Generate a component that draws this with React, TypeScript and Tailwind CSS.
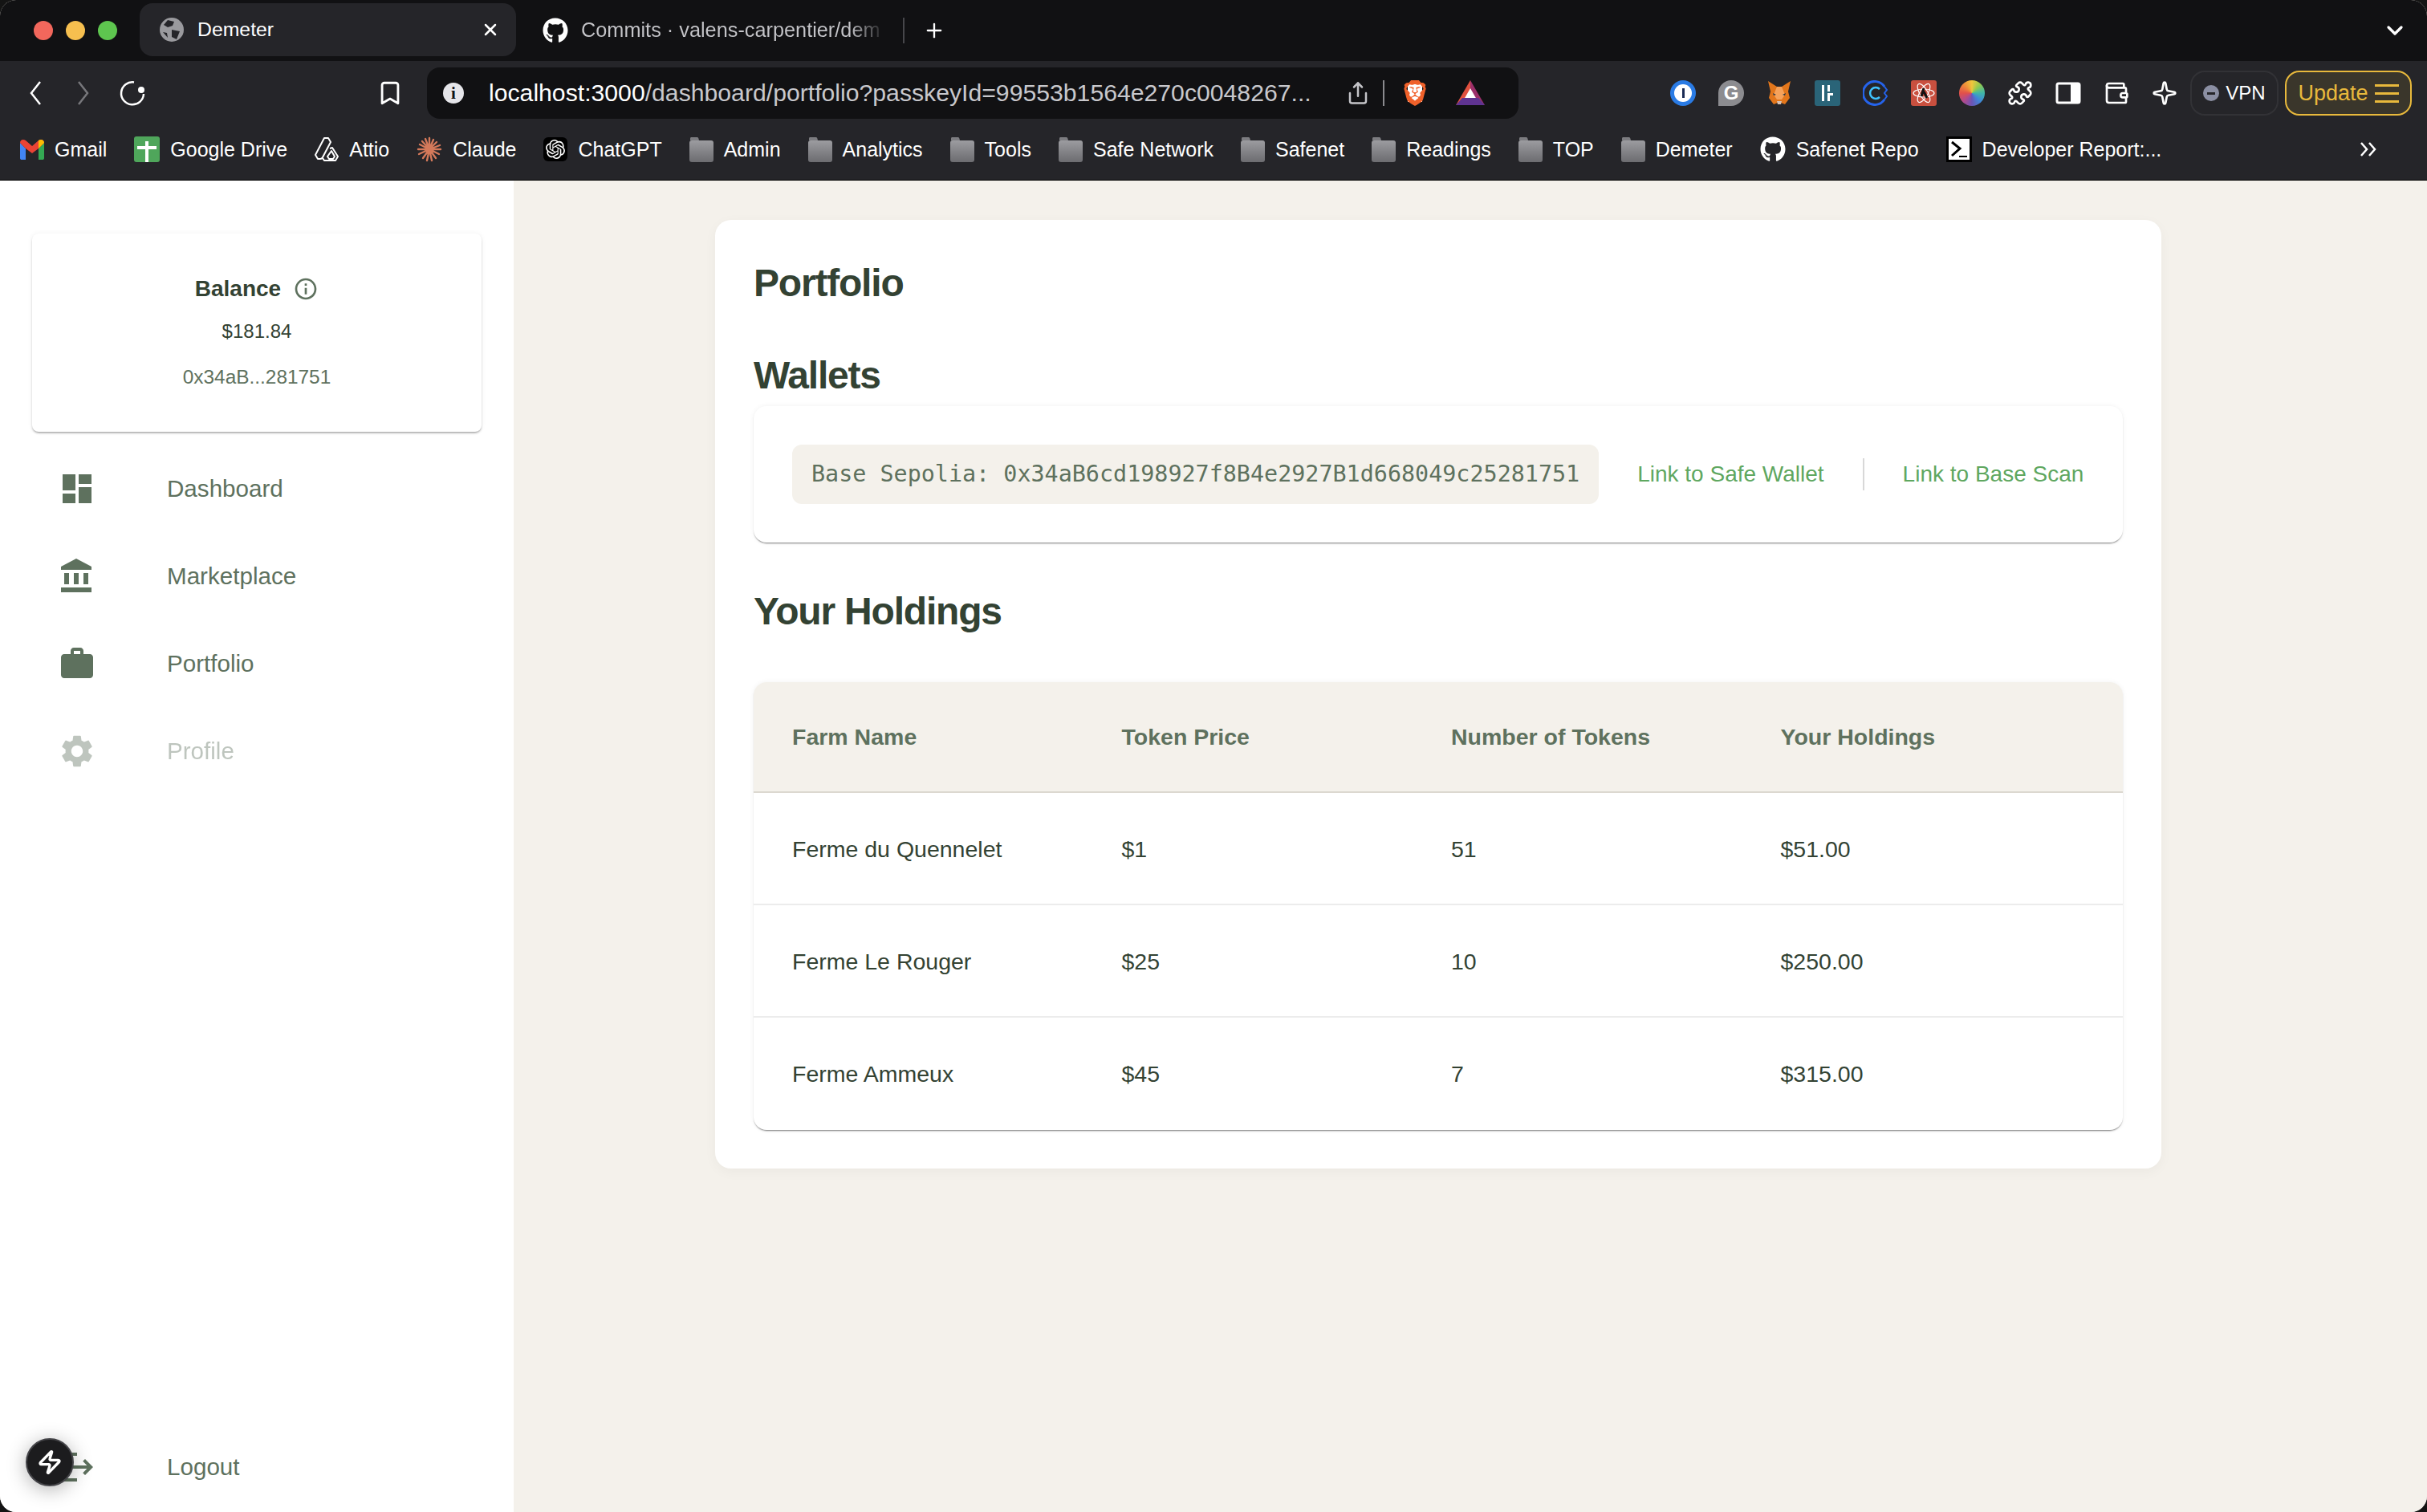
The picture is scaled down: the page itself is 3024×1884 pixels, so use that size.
import { Bookmark, ChevronDown, Plus, Puzzle, Share, Sparkle, Wallet, X, Zap } from 'lucide-react';
import { FaGithub } from 'react-icons/fa';
import { SiBrave, SiOpenai } from 'react-icons/si';
import type { ReactNode } from 'react';

const Folder = () => (
  <svg width="30" height="32" viewBox="0 0 30 32" className="shrink-0">
    <defs>
      <linearGradient id="folderFill" x1="0" y1="0" x2="0" y2="1">
        <stop offset="0" stopColor="#9c9ca0" />
        <stop offset="1" stopColor="#6c6c70" />
      </linearGradient>
    </defs>
    <path d="M1 5V2.500C1 1.500 1.700 1 2.500 1h7c1 0 1.500.5 2 2l.5 2z" fill="#7c7c80" />
    <rect x="0" y="5" width="30" height="27" rx="3" fill="url(#folderFill)" />
  </svg>
);

const Gmail = () => (
  <svg width="30" height="30" viewBox="0 0 30 30" className="shrink-0">
    <path d="M0 7v19c0 1.500 1 2 2 2h5V14z" fill="#4285f4" />
    <path d="M30 7v19c0 1.500-1 2-2 2h-5V14z" fill="#34a853" />
    <path d="M0 7c0-4 4-5 7-3l8 7 8-7c3-2 7-1 7 3l-7 7-8 6-8-6z" fill="#ea4335" />
    <path d="M23 4c3-2 7-1 7 3l-7 7z" fill="#fbbc04" />
  </svg>
);

const Attio = () => (
  <svg width="30" height="32" viewBox="0 0 30 32" fill="none" stroke="#fff" strokeWidth="2" strokeLinejoin="round" className="shrink-0">
    <path d="M12 2h5l3 5-10 19c-.5 1-1 2-3 2H4l-3-5z" />
    <path d="M19 15l3-1 7 11-3 5H12l-2-3" />
    <path d="M21 18l4 7-2 3h-5l-2-3z" />
  </svg>
);

const Claude = () => (
  <svg width="32" height="32" viewBox="0 0 32 32" stroke="#d4795a" strokeWidth="2.400" strokeLinecap="round" className="shrink-0">
    <path d="M16 16V2M16 16l5-12M16 16l9-9M16 16l13-5M16 16h14M16 16l12 6M16 16l8 11M16 16l3 14M16 16l-3 14M16 16l-8 11M16 16L3 22M16 16H2M16 16L4 10M16 16L7 6M16 16L11 3" />
  </svg>
);

const ChatGpt = () => (
  <span className="flex h-[30px] w-[30px] shrink-0 items-center justify-center rounded-[6px] bg-black">
    <SiOpenai size={24} color="#fff" />
  </span>
);

const GoogleDrive = () => (
  <span className="flex h-[32px] w-[32px] shrink-0 items-center justify-center rounded-[3px] bg-[#4fa65b]">
    <svg width="24" height="32" viewBox="0 0 24 32" fill="#fff">
      <rect x="10" y="6" width="4" height="26" />
      <rect x="0" y="12" width="24" height="4" />
    </svg>
  </span>
);

const DevReport = () => (
  <svg width="32" height="32" viewBox="0 0 32 32" className="shrink-0">
    <rect x="1.500" y="1.500" width="29" height="29" fill="#fff" stroke="#000" strokeWidth="3" />
    <path d="M7 7l10 8-10 9" fill="none" stroke="#000" strokeWidth="3" />
    <rect x="16" y="24" width="10" height="2" fill="#000" />
  </svg>
);

const bookmarks: { label: string; icon: ReactNode }[] = [
  { label: 'Gmail', icon: <Gmail /> },
  { label: 'Google Drive', icon: <GoogleDrive /> },
  { label: 'Attio', icon: <Attio /> },
  { label: 'Claude', icon: <Claude /> },
  { label: 'ChatGPT', icon: <ChatGpt /> },
  { label: 'Admin', icon: <Folder /> },
  { label: 'Analytics', icon: <Folder /> },
  { label: 'Tools', icon: <Folder /> },
  { label: 'Safe Network', icon: <Folder /> },
  { label: 'Safenet', icon: <Folder /> },
  { label: 'Readings', icon: <Folder /> },
  { label: 'TOP', icon: <Folder /> },
  { label: 'Demeter', icon: <Folder /> },
  { label: 'Safenet Repo', icon: <FaGithub size={32} color="#fff" className="shrink-0" /> },
  { label: 'Developer Report:...', icon: <DevReport /> },
];

const navItems = [
  { label: 'Dashboard', path: 'M3 13h8V3H3zm0 8h8v-6H3zm10 0h8V11h-8zm0-18v6h8V3z', disabled: false },
  { label: 'Marketplace', path: 'M4 10v7h3v-7zm6 0v7h3v-7zM2 22h19v-3H2zm14-12v7h3v-7zm-4.500-9L2 6v2h19V6z', disabled: false },
  {
    label: 'Portfolio',
    path: 'M20 6h-4V4c0-1.110-.89-2-2-2h-4c-1.110 0-2 .89-2 2v2H4c-1.110 0-1.990.89-1.990 2L2 19c0 1.110.89 2 2 2h16c1.110 0 2-.89 2-2V8c0-1.110-.89-2-2-2m-6 0h-4V4h4z',
    disabled: false,
  },
  {
    label: 'Profile',
    path: 'M19.140 12.940c.04-.3.06-.61.06-.94 0-.32-.02-.64-.07-.94l2.030-1.580c.18-.14.23-.41.12-.61l-1.920-3.320c-.12-.22-.37-.29-.59-.22l-2.390.96c-.5-.38-1.030-.7-1.620-.94l-.36-2.540c-.04-.24-.24-.41-.48-.41h-3.840c-.24 0-.43.17-.47.41l-.36 2.540c-.59.24-1.130.57-1.620.94l-2.390-.96c-.22-.08-.47 0-.59.22L2.740 8.870c-.12.21-.08.47.12.61l2.030 1.580c-.05.3-.09.63-.09.94s.02.64.07.94l-2.030 1.580c-.18.14-.23.41-.12.61l1.920 3.320c.12.22.37.29.59.22l2.390-.96c.5.38 1.030.7 1.620.94l.36 2.540c.05.24.24.41.48.41h3.840c.24 0 .44-.17.47-.41l.36-2.540c.59-.24 1.130-.56 1.620-.94l2.390.96c.22.08.47 0 .59-.22l1.920-3.320c.12-.22.07-.47-.12-.61l-2.010-1.580zM12 15.600c-1.980 0-3.600-1.620-3.600-3.600s1.620-3.600 3.600-3.600 3.600 1.620 3.600 3.600-1.620 3.600-3.600 3.600z',
    disabled: true,
  },
];

const holdings = [
  { farm: 'Ferme du Quennelet', price: '$1', tokens: '51', total: '$51.00' },
  { farm: 'Ferme Le Rouger', price: '$25', tokens: '10', total: '$250.00' },
  { farm: 'Ferme Ammeux', price: '$45', tokens: '7', total: '$315.00' },
];

const Extensions = () => (
  <div className="flex items-center gap-[28px]">
    {/* 1Password */}
    <span className="flex h-[32px] w-[32px] items-center justify-center rounded-full bg-[#2a7be4]">
      <span className="flex h-[22px] w-[22px] items-center justify-center rounded-full bg-white">
        <span className="h-[12px] w-[3px] bg-[#1a2b55]" />
      </span>
    </span>
    {/* Grammarly */}
    <span className="flex h-[32px] w-[32px] items-center justify-center rounded-full rounded-bl-[3px] bg-[#8c8c90] text-[24px] font-bold leading-none text-white">
      G
    </span>
    {/* MetaMask */}
    <svg width="32" height="32" viewBox="0 0 32 32">
      <path d="M2 1l11 7h6l11-7-3 13 2 8-6 8-5-2h-4l-5 2-6-8 2-8z" fill="#e2761b" />
      <path d="M13 8h6l4 10-4 6h-6l-4-6z" fill="#f6a25a" />
      <path d="M13 26h6l-1 4h-4z" fill="#d7c1b3" />
      <path d="M8 16l4 2-3 1zM24 16l-4 2 3 1z" fill="#233447" />
    </svg>
    {/* teal square */}
    <span className="flex h-[32px] w-[32px] items-center justify-center rounded-[3px] bg-[#2a6478]">
      <svg width="18" height="24" viewBox="0 0 18 24" fill="#fff">
        <rect x="2" y="2" width="3" height="20" />
        <rect x="9" y="2" width="3" height="8" />
        <rect x="9" y="12" width="7" height="3" />
        <rect x="9" y="15" width="3" height="7" />
      </svg>
    </span>
    {/* blue C */}
    <svg width="32" height="32" viewBox="0 0 32 32" fill="none">
      <path d="M27 8A14.500 14.500 0 1 0 27 24" stroke="#2563eb" strokeWidth="3" />
      <path d="M27 8l3 4-3 4 3 4-3 4" stroke="#2563eb" strokeWidth="2" />
      <path d="M21 11a7 7 0 1 0 0 10" stroke="#3fc3ff" strokeWidth="2.500" />
    </svg>
    {/* red atom */}
    <span className="flex h-[32px] w-[32px] items-center justify-center rounded-[3px] bg-[#c9503f]">
      <svg width="28" height="28" viewBox="0 0 28 28" fill="none" stroke="#fff" strokeWidth="1.200">
        <ellipse cx="14" cy="14" rx="13" ry="5" />
        <ellipse cx="14" cy="14" rx="13" ry="5" transform="rotate(60 14 14)" />
        <ellipse cx="14" cy="14" rx="13" ry="5" transform="rotate(120 14 14)" />
        <path d="M14 8l-3 10M14 12l4 8" stroke="#111" strokeWidth="3" />
      </svg>
    </span>
    {/* colour wheel */}
    <span className="h-[32px] w-[32px] rounded-full bg-[conic-gradient(#f0c63c,#8fc950,#3fb6a8,#3f86d8,#6a55b5,#b04a8e,#e2504a,#ee8a3a,#f0c63c)]" />
    <Puzzle size={32} color="#fff" strokeWidth={2} />
    {/* side panel */}
    <svg width="32" height="32" viewBox="0 0 32 32">
      <rect x="2" y="4" width="28" height="24" rx="2" fill="none" stroke="#fff" strokeWidth="3" />
      <rect x="19" y="4" width="11" height="24" fill="#fff" />
    </svg>
    <Wallet size={32} color="#fff" strokeWidth={2} />
    <Sparkle size={32} color="#fff" strokeWidth={2} />
  </div>
);

export default function App() {
  return (
    <div className="h-[1884px] w-[3024px] overflow-hidden bg-[#141414] font-['Liberation_Sans',Arial,sans-serif]">
      <div className="relative flex h-full flex-col overflow-hidden rounded-[20px] bg-[#f4f1eb]">
        {/* tab strip */}
        <div className="flex h-[76px] shrink-0 items-center bg-[#111113] pl-[42px] pr-[24px] text-white">
          <div className="flex w-[132px] shrink-0 gap-[16px]">
            <span className="h-[24px] w-[24px] rounded-full bg-[#f2675c]" />
            <span className="h-[24px] w-[24px] rounded-full bg-[#f6bf4f]" />
            <span className="h-[24px] w-[24px] rounded-full bg-[#5ec64f]" />
          </div>
          <div className="mt-[-2px] flex h-[66px] w-[469px] shrink-0 items-center rounded-[16px] bg-[#252529] pl-[25px] pr-[20px]">
            <svg width="30" height="30" viewBox="0 0 30 30" className="shrink-0">
              <circle cx="15" cy="15" r="15" fill="#9a9a9e" />
              <path d="M10 3l8 2-2 5-6 2-5-3zM15 15l10 2-4 10-6-3zM4 18l5 1 1 6z" fill="#252529" />
            </svg>
            <span className="ml-[17px] text-[24.800px] leading-none">Demeter</span>
            <X size={24} color="#fff" strokeWidth={2.500} className="ml-auto" />
          </div>
          <FaGithub size={32} color="#fff" className="ml-[33px] shrink-0" />
          <div className="ml-[16px] w-[380px] shrink-0 whitespace-nowrap bg-[linear-gradient(90deg,#c4c4c8_88%,transparent)] bg-clip-text text-[25.300px] leading-none text-transparent">
            Commits · valens-carpentier/dem
          </div>
          <span className="ml-[21px] h-[32px] w-[2px] shrink-0 bg-[#47474b]" />
          <Plus size={28} color="#fff" strokeWidth={2} className="ml-[23px] shrink-0" />
          <ChevronDown size={32} color="#fff" strokeWidth={2.500} className="ml-auto" />
        </div>

        {/* toolbar */}
        <div className="flex h-[76px] shrink-0 items-center bg-[#252529] pl-[36px] pt-[4px] text-white">
          <svg width="16" height="32" viewBox="0 0 16 32" fill="none" stroke="#fff" strokeWidth="2.500" className="shrink-0">
            <path d="M14 2L3 16l11 14" />
          </svg>
          <svg width="16" height="32" viewBox="0 0 16 32" fill="none" stroke="#77777b" strokeWidth="2.500" className="ml-[44px] shrink-0">
            <path d="M2 2l11 14L2 30" />
          </svg>
          <svg width="32" height="34" viewBox="0 0 32 34" fill="none" className="ml-[37px] shrink-0">
            <path d="M18 3.500A14 14 0 1 0 30 18" stroke="#fff" strokeWidth="2.500" />
            <circle cx="27" cy="13" r="4" fill="#fff" />
          </svg>
          <Bookmark size={34} color="#fff" strokeWidth={2} className="ml-[288px] shrink-0" />
          <div className="ml-[29px] flex h-[64px] w-[1360px] shrink-0 items-center rounded-[16px] bg-[#111113] pl-[20px] pr-[42px]">
            <span className="flex h-[26px] w-[26px] shrink-0 items-center justify-center rounded-full bg-[#e6e6ea] font-['Liberation_Serif',serif] text-[21px] font-bold leading-none text-[#111113]">
              i
            </span>
            <span className="ml-[31px] whitespace-nowrap text-[30.200px] leading-none text-[#c8c8cc]">
              <span className="text-white">localhost:3000</span>/dashboard/portfolio?passkeyId=99553b1564e270c0048267...
            </span>
            <Share size={30} color="#c4c4c8" strokeWidth={2} className="ml-auto shrink-0" />
            <span className="ml-[16px] h-[32px] w-[2px] shrink-0 bg-[#8a8a8e]" />
            <span className="relative ml-[22px] flex h-[36px] w-[32px] shrink-0 items-center justify-center">
              <span className="absolute h-[22px] w-[18px] bg-white" />
              <SiBrave size={36} color="#f0612a" className="relative" />
            </span>
            <svg width="36" height="32" viewBox="0 0 36 32" className="ml-[35px] shrink-0">
              <path d="M18 0L0 31l18-7z" fill="#e0503f" />
              <path d="M18 0l18 31-18-7z" fill="#9c2f6a" />
              <path d="M18 10l8 14H10z" fill="#fff" />
              <path d="M0 31l8-9h20l8 9z" fill="#5f3391" />
            </svg>
          </div>
          <div className="ml-[189px]">
            <Extensions />
          </div>
          <div className="ml-[16px] flex h-[56px] w-[110px] shrink-0 items-center justify-center gap-[8px] rounded-[18px] border-2 border-[#323236] text-[24px]">
            <span className="flex h-[20px] w-[20px] items-center justify-center rounded-full bg-[#8b8fa3]">
              <span className="h-[3px] w-[10px] bg-[#252529]" />
            </span>
            VPN
          </div>
          <div className="ml-[8px] flex h-[56px] w-[158px] shrink-0 items-center justify-center gap-[8px] rounded-[18px] border-2 border-[#e8b93c] bg-[#3a362b] text-[27px] text-[#e8b93c]">
            Update
            <span className="flex w-[30px] flex-col gap-[7px]">
              <span className="h-[3px] bg-[#e8b93c]" />
              <span className="h-[3px] bg-[#e8b93c]" />
              <span className="h-[3px] bg-[#e8b93c]" />
            </span>
          </div>
        </div>

        {/* bookmarks bar */}
        <div className="flex h-[73px] shrink-0 items-center border-b border-[#000] bg-[#252529] pb-[4px] pl-[25px] pr-[62px] text-[25px] leading-none text-white">
          <div className="flex items-center gap-[34px]">
            {bookmarks.map((b) => (
              <div key={b.label} className="flex items-center gap-[13px] whitespace-nowrap">
                {b.icon}
                <span>{b.label}</span>
              </div>
            ))}
          </div>
          <svg width="22" height="20" viewBox="0 0 22 20" fill="none" stroke="#fff" strokeWidth="2.500" className="ml-auto shrink-0">
            <path d="M2 2l7 8-7 8M12 2l7 8-7 8" />
          </svg>
        </div>

        {/* page */}
        <div className="flex min-h-0 flex-1">
          <aside className="flex w-[640px] shrink-0 flex-col bg-white">
            <div className="mx-[40px] mt-[66px] flex h-[247px] flex-col items-center rounded-[8px] bg-white pt-[52px] shadow-[0_2px_3px_-1px_rgba(0,0,0,0.45),0_0_6px_rgba(0,0,0,0.06)]">
              <div className="relative flex items-center gap-[15px] text-[28px] font-bold leading-[34px] text-[#334233]">
                <span>Balance</span>
                <svg width="32" height="32" viewBox="0 0 24 24" fill="#5e715e">
                  <path d="M11 7h2v2h-2zm0 4h2v6h-2zm1-9C6.480 2 2 6.480 2 12s4.480 10 10 10 10-4.480 10-10S17.520 2 12 2m0 18c-4.410 0-8-3.590-8-8s3.590-8 8-8 8 3.590 8 8-3.590 8-8 8" />
                </svg>
              </div>
              <div className="mt-[22px] text-[24px] leading-[28px] text-[#334233]">$181.84</div>
              <div className="mt-[29px] text-[24.400px] leading-[28px] text-[#5e715e]">0x34aB...281751</div>
            </div>
            <nav className="mt-[16px] flex flex-col">
              {navItems.map((item) => (
                <div key={item.label} className={`flex h-[109px] items-center pl-[72px] ${item.disabled ? 'opacity-40' : ''}`}>
                  <svg width="48" height="48" viewBox="0 0 24 24" fill="#5e715e" className="shrink-0">
                    <path d={item.path} />
                  </svg>
                  <span className="ml-[88px] text-[29.600px] leading-none text-[#5e715e]">{item.label}</span>
                </div>
              ))}
            </nav>
            <div className="mt-auto flex h-[109px] items-center pb-[4px] pl-[72px]">
              <svg width="48" height="48" viewBox="0 0 24 24" fill="#5e715e" className="shrink-0">
                <path d="m17 7-1.410 1.410L18.170 11H8v2h10.170l-2.580 2.580L17 17l5-5zM4 5h8V3H4c-1.100 0-2 .9-2 2v14c0 1.100.9 2 2 2h8v-2H4z" />
              </svg>
              <span className="ml-[88px] text-[29.600px] leading-none text-[#5e715e]">Logout</span>
            </div>
          </aside>

          <main className="min-w-0 flex-1 bg-[#f4f1eb] pl-[251px] pt-[49px]">
            <div className="flex w-[1802px] flex-col rounded-[20px] bg-white p-[48px] pt-[50px] shadow-[0_4px_16px_rgba(0,0,0,0.04)]">
              <h1 className="text-[48px] font-bold leading-[58px] tracking-[-1.200px] text-[#334233]">Portfolio</h1>
              <h2 className="mt-[57px] text-[48px] font-bold leading-[58px] tracking-[-1.200px] text-[#334233]">Wallets</h2>
              <div className="mt-[9px] flex h-[170px] items-center rounded-[16px] bg-white px-[48px] text-[28px] leading-none shadow-[0_2px_2px_-1px_rgba(0,0,0,0.5),0_0_6px_rgba(0,0,0,0.06)]">
                <code className="flex h-[74px] shrink-0 items-center whitespace-nowrap rounded-[12px] bg-[#f4f1eb] px-[24px] font-['DejaVu_Sans_Mono',monospace] text-[28.400px] text-[#5e715e]">
                  Base Sepolia: 0x34aB6cd198927f8B4e2927B1d668049c25281751
                </code>
                <span className="ml-[48px] whitespace-nowrap text-[#5fa75f]">Link to Safe Wallet</span>
                <span className="ml-[48px] h-[40px] w-[2px] shrink-0 bg-[#d8d8d8]" />
                <span className="ml-[48px] whitespace-nowrap text-[#5fa75f]">Link to Base Scan</span>
              </div>
              <h2 className="mt-[57px] text-[48px] font-bold leading-[58px] tracking-[-1.200px] text-[#334233]">Your Holdings</h2>
              <div className="mt-[59px] overflow-hidden rounded-[16px] bg-white text-[28.500px] leading-none text-[#334233] shadow-[0_2px_2px_-1px_rgba(0,0,0,0.5),0_0_6px_rgba(0,0,0,0.06)]">
                <div className="grid h-[138px] grid-cols-[410.500px_410.500px_410.500px_1fr] items-center border-b-2 border-[#dcd8d0] bg-[#f4f1eb] pl-[48px] font-bold text-[#5e715e]">
                  <span>Farm Name</span>
                  <span>Token Price</span>
                  <span>Number of Tokens</span>
                  <span>Your Holdings</span>
                </div>
                {holdings.map((row, i) => (
                  <div
                    key={row.farm}
                    className={`grid h-[140px] grid-cols-[410.500px_410.500px_410.500px_1fr] items-center pl-[48px] ${i < holdings.length - 1 ? 'border-b-2 border-[#ececec] pt-[2px]' : ''}`}
                  >
                    <span>{row.farm}</span>
                    <span>{row.price}</span>
                    <span>{row.tokens}</span>
                    <span>{row.total}</span>
                  </div>
                ))}
              </div>
            </div>
          </main>
        </div>

        {/* dev tools badge */}
        <div className="absolute bottom-[32px] left-[32px] flex h-[60px] w-[60px] items-center justify-center rounded-full border-2 border-[#444448] bg-[#1c1c1e] shadow-[0_4px_24px_rgba(0,0,0,0.3)]">
          <Zap size={32} color="#fff" strokeWidth={2.500} />
        </div>
      </div>
    </div>
  );
}
